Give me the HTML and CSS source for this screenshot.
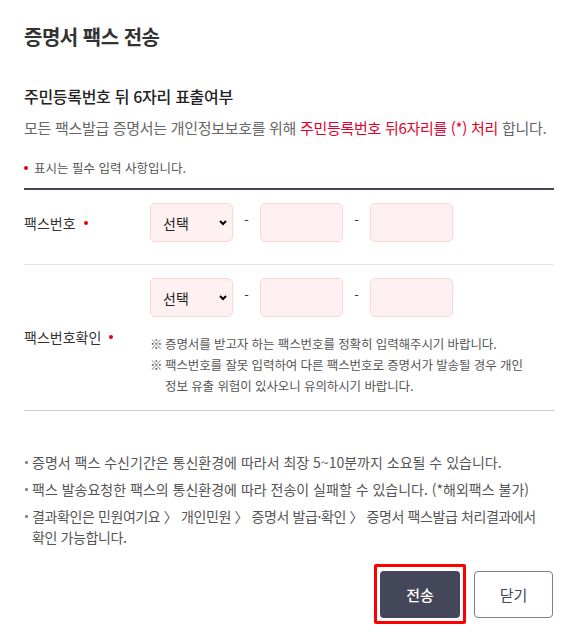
FILE: index.html
```html
<!DOCTYPE html>
<html lang="ko">
<head>
    <meta charset="UTF-8">
    <title>증명서 팩스 전송</title>
    <link rel="stylesheet" href="styles.css">
</head>
<body>
    <div class="popup">
        <h1 class="popup-title">증명서 팩스 전송</h1>

        <section class="notice">
            <h2 class="notice-title">주민등록번호 뒤 6자리 표출여부</h2>
            <p class="notice-desc">모든 팩스발급 증명서는 개인정보보호를 위해 <em>주민등록번호 뒤6자리를 (*) 처리</em> 합니다.</p>
        </section>

        <p class="required-guide"><span class="req-dot"></span>표시는 필수 입력 사항입니다.</p>

        <div class="form-table">
            <div class="form-row">
                <div class="form-label">팩스번호<span class="req-dot"></span></div>
                <div class="form-field">
                    <div class="fax-inputs">
                        <select class="fax-select">
                            <option>선택</option>
                        </select>
                        <span class="dash">-</span>
                        <input type="text" class="fax-input">
                        <span class="dash">-</span>
                        <input type="text" class="fax-input">
                    </div>
                </div>
            </div>

            <div class="form-row">
                <div class="form-label">팩스번호확인<span class="req-dot"></span></div>
                <div class="form-field">
                    <div class="fax-inputs">
                        <select class="fax-select">
                            <option>선택</option>
                        </select>
                        <span class="dash">-</span>
                        <input type="text" class="fax-input">
                        <span class="dash">-</span>
                        <input type="text" class="fax-input">
                    </div>
                    <ul class="field-notes">
                        <li>증명서를 받고자 하는 팩스번호를 정확히 입력해주시기 바랍니다.</li>
                        <li>팩스번호를 잘못 입력하여 다른 팩스번호로 증명서가 발송될 경우 개인 정보 유출 위험이 있사오니 유의하시기 바랍니다.</li>
                    </ul>
                </div>
            </div>
        </div>

        <ul class="info-list">
            <li>증명서 팩스 수신기간은 통신환경에 따라서 최장 5~10분까지 소요될 수 있습니다.</li>
            <li>팩스 발송요청한 팩스의 통신환경에 따라 전송이 실패할 수 있습니다. (*해외팩스 불가)</li>
            <li class="path">결과확인은 민원여기요 〉 개인민원 〉 증명서 발급·확인 〉 증명서 팩스발급 처리결과에서 확인 가능합니다.</li>
        </ul>

        <div class="btn-area">
            <span class="focus-ring">
                <button type="button" class="btn btn-primary">전송</button>
            </span>
            <button type="button" class="btn btn-line">닫기</button>
        </div>
    </div>
</body>
</html>
```

FILE: styles.css
```css
* {
    margin: 0;
    padding: 0;
    box-sizing: border-box;
}

body {
    font-family: "Noto Sans CJK KR", "Noto Sans", sans-serif;
    color: #333;
    background: #fff;
}

.popup {
    width: 572px;
    padding: 24px 18px 0 24px;
}

.popup-title {
    font-size: 20px;
    font-weight: 700;
    line-height: 26px;
    color: #333;
    letter-spacing: -0.5px;
}

.notice {
    margin-top: 35px;
}

.notice-title {
    font-size: 16px;
    font-weight: 500;
    line-height: 22px;
    color: #222;
    letter-spacing: -0.3px;
}

.notice-desc {
    margin-top: 10px;
    font-size: 15px;
    line-height: 22px;
    color: #666;
    letter-spacing: -0.3px;
}

.notice-desc em {
    font-style: normal;
    color: #e4002b;
}

.required-guide {
    margin-top: 20px;
    font-size: 12.5px;
    line-height: 18px;
    color: #555;
    display: flex;
    align-items: center;
    gap: 6px;
}

.req-dot {
    display: inline-block;
    width: 4px;
    height: 4px;
    border-radius: 50%;
    background: #e60012;
}

/* 입력 테이블 */
.form-table {
    margin-top: 11px;
    border-top: 2px solid #444659;
    border-bottom: 1px solid #cacad2;
}

.form-row {
    display: flex;
    align-items: center;
    padding: 13px 0 14px;
}

.form-row:first-child {
    padding-bottom: 22px;
}

.form-row + .form-row {
    border-top: 1px solid #e5e5e5;
}

.form-label {
    width: 126px;
    flex-shrink: 0;
    font-size: 14px;
    color: #333;
    display: flex;
    align-items: center;
    gap: 8px;
}

.fax-inputs {
    display: flex;
    align-items: center;
}

.fax-select,
.fax-input {
    width: 83px;
    height: 39px;
    border: 1px solid #fcd6d2;
    border-radius: 5px;
    background-color: #fff1f1;
    font-family: inherit;
    font-size: 14px;
    color: #222;
}

.fax-select {
    appearance: none;
    padding: 0 26px 0 12px;
    background-image: url("data:image/svg+xml;charset=UTF-8,%3csvg xmlns='http://www.w3.org/2000/svg' viewBox='0 0 10 8'%3e%3cpolyline points='2 2 5 5 8 2' fill='none' stroke='%23000' stroke-width='2'/%3e%3c/svg%3e");
    background-repeat: no-repeat;
    background-position: right 4px center;
    background-size: 10px 8px;
}

.dash {
    width: 27px;
    text-align: center;
    font-size: 13px;
    color: #333;
    margin-top: -6px;
}

.field-notes {
    list-style: none;
    margin-top: 16px;
    width: 380px;
    font-size: 12.5px;
    line-height: 21px;
    color: #555;
    letter-spacing: -0.1px;
}

.field-notes li {
    position: relative;
    padding-left: 15px;
}

.field-notes li::before {
    content: "※";
    position: absolute;
    left: 0;
    top: 0;
}

/* 안내 목록 */
.info-list {
    list-style: none;
    margin-top: 41px;
    font-size: 14px;
    color: #555;
}

.info-list li {
    position: relative;
    padding: 0 4px 0 8px;
    line-height: 21px;
    margin-bottom: 6px;
}

.info-list li:last-child {
    margin-bottom: 0;
}

.info-list li.path {
    letter-spacing: -0.4px;
}

.info-list li::before {
    content: "";
    position: absolute;
    left: 1px;
    top: 9px;
    width: 3px;
    height: 3px;
    border-radius: 1px;
    background: #888;
}

.btn-area {
    display: flex;
    justify-content: flex-end;
    align-items: center;
    gap: 8px;
    margin-top: 16px;
}

.focus-ring {
    display: block;
    padding: 4px 3px 3px;
    border: 3px solid #ff0000;
    border-radius: 2px;
}

.btn {
    width: 80px;
    height: 47px;
    border-radius: 4px;
    font-family: inherit;
    font-size: 15px;
    cursor: pointer;
}

.btn-primary {
    display: block;
    background: #444659;
    color: #fff;
    border: none;
    font-weight: 500;
}

.btn-line {
    background: #fff;
    color: #444659;
    border: 1px solid #7d7f8f;
    width: 79px;
    margin-right: 1px;
}
```
